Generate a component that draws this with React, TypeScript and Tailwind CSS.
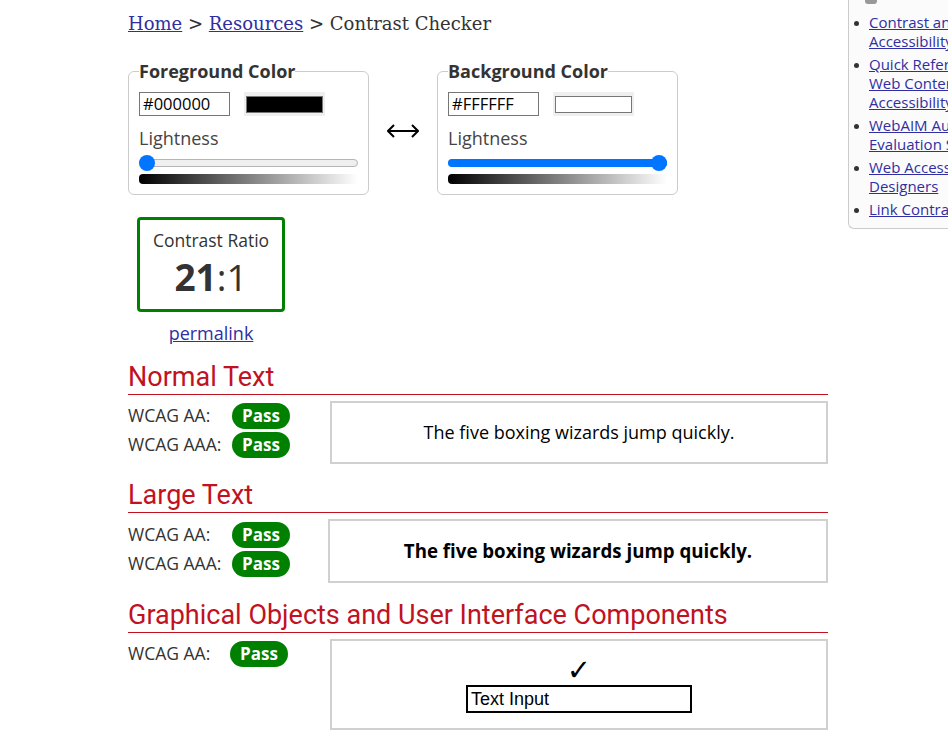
import React from 'react'

const LINK = 'text-[#2f2fa3] underline'

function Slider({ value }: { value: 0 | 100 }) {
  return (
    <div className="relative h-4 w-[219px]">
      <div className="absolute left-0 right-0 top-[4px] h-[8px] rounded-full border border-[#b5b5b5] bg-[#efefef]" />
      {value === 100 && <div className="absolute left-0 right-0 top-[4px] h-[8px] rounded-full bg-[#0075ff]" />}
      <div className={`absolute top-0 size-4 rounded-full bg-[#0075ff] ${value === 100 ? 'right-0' : 'left-0'}`} />
    </div>
  )
}

function ColorBox({ label, hex, swatch }: { label: string; hex: string; swatch: string }) {
  return (
    <fieldset className="w-[241px] rounded-[6px] border border-[#cccccc] px-[10px] pb-[10px] pt-[9px]">
      <legend className="text-[18px] font-bold leading-[23px] text-[#333]">{label}</legend>
      <div className="flex items-center gap-[14px]">
        <div className="flex h-[24px] w-[91px] items-center border border-[#767676] px-[3px] text-[16.5px] text-black">{hex}</div>
        <div className="flex h-[24px] w-[81px] items-center bg-[#efefef] px-[2px]">
          <div className={`h-[17px] w-full border border-[#767676] ${swatch}`} />
        </div>
      </div>
      <div className="mt-[10px] text-[18px] leading-[24px] text-[#444]">Lightness</div>
      <div className="mt-[5px]"><Slider value={swatch === 'bg-black' ? 0 : 100} /></div>
      <div className="mt-[3px] h-[10px] w-[219px] rounded-l-[4px] bg-gradient-to-r from-black to-white/0" />
    </fieldset>
  )
}

function Pass() {
  return (
    <span className="inline-flex h-[26px] w-[58px] items-center justify-center rounded-full bg-[#008000] text-[17px] font-bold text-white">Pass</span>
  )
}

function Row({ label, w = 'w-[104px]' }: { label: string; w?: string }) {
  return (
    <div className="flex h-[29px] items-center">
      <span className={`${w} text-[17.5px] text-[#333]`}>{label}</span>
      <Pass />
    </div>
  )
}

function Heading({ children }: { children: React.ReactNode }) {
  return (
    <h2
      className="border-b border-[#c1121f] pb-[2px] text-[27px] leading-[30px] text-[#c1121f]"
      style={{ fontFamily: 'Roboto, sans-serif' }}
    >
      {children}
    </h2>
  )
}

const SIDE = [
  ['Contrast and Color', 'Accessibility'],
  ['Quick Reference:', 'Web Content', 'Accessibility Guidelines'],
  ['WebAIM Automated', 'Evaluation Services'],
  ['Web Accessibility for', 'Designers'],
  ['Link Contrast Checker'],
]

export default function App() {
  return (
    <div className="flex min-h-[740px] w-[948px] overflow-hidden bg-white text-[#333]" style={{ fontFamily: '"Open Sans", sans-serif' }}>
      <main className="ml-[128px] w-[700px] shrink-0">
        <nav className="pt-[12px] text-[18px] leading-[24px] text-[#333]" style={{ fontFamily: '"DejaVu Serif", serif' }}>
          <a className={LINK}>Home</a> &gt; <a className={LINK}>Resources</a> &gt; Contrast Checker
        </nav>

        <div className="mt-[24px] flex items-center gap-[18px]">
          <ColorBox label="Foreground Color" hex="#000000" swatch="bg-black" />
          <svg width="32" height="14" viewBox="0 0 32 14" className="mt-[6px]">
            <path d="M1 7h30M7 1L1 7l6 6M25 1l6 6-6 6" fill="none" stroke="black" strokeWidth="2" />
          </svg>
          <ColorBox label="Background Color" hex="#FFFFFF" swatch="bg-white" />
        </div>

        <div className="ml-[9px] mt-[22px] flex w-[148px] flex-col items-center">
          <div className="flex h-[95px] w-[148px] flex-col items-center rounded-[4px] border-[3px] border-[#008000] pt-[9px]">
            <div className="text-[17.5px] leading-[22px] text-[#333]">Contrast Ratio</div>
            <div className="mt-[4px] text-[37px] leading-[44px] text-[#333]"><b>21</b>:1</div>
          </div>
          <a className={`${LINK} mt-[9px] text-[18px] leading-[24px]`}>permalink</a>
        </div>

        <section className="mt-[17px]">
          <Heading>Normal Text</Heading>
          <div className="mt-[6px] flex">
            <div className="w-[202px]">
              <Row label="WCAG AA:" />
              <Row label="WCAG AAA:" />
            </div>
            <div className="flex h-[63px] flex-1 items-center justify-center border-2 border-[#d0d0d0] text-[18px] text-black">
              The five boxing wizards jump quickly.
            </div>
          </div>
        </section>

        <section className="mt-[16px]">
          <Heading>Large Text</Heading>
          <div className="mt-[6px] flex">
            <div className="w-[200px] pt-[1px]">
              <Row label="WCAG AA:" />
              <Row label="WCAG AAA:" />
            </div>
            <div className="flex h-[64px] flex-1 items-center justify-center border-2 border-[#d0d0d0] text-[18.7px] font-bold text-black">
              The five boxing wizards jump quickly.
            </div>
          </div>
        </section>

        <section className="mt-[17px]">
          <Heading>Graphical Objects and User Interface Components</Heading>
          <div className="mt-[6px] flex">
            <div className="w-[202px]">
              <Row label="WCAG AA:" w="w-[102px]" />
            </div>
            <div className="flex h-[91px] flex-1 flex-col items-center border-2 border-[#d0d0d0] pt-[15px]">
              <span className="text-[29px] font-bold leading-[28px] text-black" style={{ fontFamily: '"DejaVu Sans", sans-serif' }}>✓</span>
              <div className="mt-[1px] flex h-[28px] w-[226px] items-center border-2 border-black px-[3px] text-[18px] text-black" style={{ fontFamily: '"Liberation Sans", sans-serif' }}>
                Text Input
              </div>
            </div>
          </div>
        </section>
      </main>

      <aside className="ml-[20px] h-[229px] w-[260px] shrink-0 rounded-bl-[6px] border-b border-l border-[#cccccc] bg-[#fbfbfb]">
        <div className="ml-[16px] h-[4px] w-[12px] rounded-b-[3px] bg-[#999]" />
        <ul className="mt-[9px] flex flex-col gap-[4px] pl-[5px] text-[15px] leading-[19px]">
          {SIDE.map((lines, i) => (
            <li key={i} className="flex">
              <span className="mr-[10px] mt-[8px] size-[5px] shrink-0 rounded-full bg-[#333]" />
              <a className={`${LINK} whitespace-nowrap`}>
                {lines.map((l, j) => (
                  <span key={j} className="block">{l}</span>
                ))}
              </a>
            </li>
          ))}
        </ul>
      </aside>
    </div>
  )
}
